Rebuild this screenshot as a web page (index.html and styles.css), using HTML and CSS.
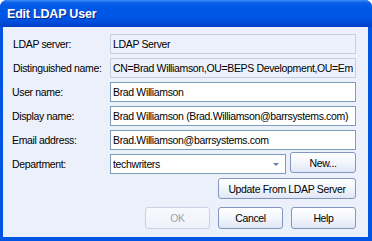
FILE: index.html
```html
<!DOCTYPE html>
<html lang="en">
<head>
  <meta charset="UTF-8">
  <title>Edit LDAP User</title>
  <link rel="stylesheet" href="styles.css">
</head>
<body>
  <div class="window">
    <div class="titlebar">
      <span class="title">Edit LDAP User</span>
    </div>
    <div class="client">
      <div class="form">
        <label class="indent">LDAP server:</label>
        <input type="text" class="field readonly" value="LDAP Server" readonly>

        <label class="indent">Distinguished name:</label>
        <input type="text" class="field readonly" value="CN=Brad Williamson,OU=BEPS Development,OU=Employees,DC=barrsystems,DC=com" readonly>

        <label>User name:</label>
        <input type="text" class="field" value="Brad Williamson">

        <label>Display name:</label>
        <input type="text" class="field" value="Brad Williamson (Brad.Williamson@barrsystems.com)">

        <label>Email address:</label>
        <input type="text" class="field" value="Brad.Williamson@barrsystems.com">

        <label>Department:</label>
        <div class="combo-row">
          <div class="combo">
            <span class="combo-text">techwriters</span>
            <span class="combo-arrow"></span>
          </div>
          <button class="btn new-btn">New...</button>
        </div>
      </div>

      <div class="update-row">
        <button class="btn update-btn">Update From LDAP Server</button>
      </div>

      <div class="actions">
        <button class="btn" disabled>OK</button>
        <button class="btn">Cancel</button>
        <button class="btn">Help</button>
      </div>
    </div>
  </div>
</body>
</html>
```

FILE: styles.css
```css
body {
  margin: 0;
  padding: 0;
  background-color: #fff;
  font-family: 'Liberation Sans', Arial, sans-serif;
  font-size: 10.5px;
  letter-spacing: -0.35px;
  color: #000;
}
.window {
  width: 372px;
  height: 241px;
  display: flex;
  flex-direction: column;
  border-radius: 7px 7px 0 0;
  overflow: hidden;
  background-color: #0054e3;
  box-sizing: border-box;
}
.titlebar {
  height: 27px;
  flex-shrink: 0;
  display: flex;
  align-items: center;
  padding-left: 7px;
  background: linear-gradient(#3d8bf7 0px, #0a5ee9 3px, #0058e6 8px, #0055e5 18px, #0048d6 24px, #003fc4 27px);
}
.title {
  color: #fff;
  font-weight: bold;
  font-size: 12.5px;
  letter-spacing: -0.2px;
  text-shadow: 1px 1px 0 #0a2a8a;
}
.client {
  flex: 1;
  margin: 0 4px 4px 3px;
  background-color: #ecf0fb;
  padding: 7px 12px 0 8px;
}
.form {
  display: grid;
  grid-template-columns: 99px 1fr;
  grid-auto-rows: 20px;
  row-gap: 4px;
  align-items: center;
}
label {
  padding-left: 1px;
  white-space: nowrap;
}
label.indent {
  padding-left: 2px;
}
.field {
  height: 20px;
  box-sizing: border-box;
  border: 1px solid #7f9db9;
  background-color: #fff;
  padding: 0 2px;
  font-family: inherit;
  font-size: inherit;
  letter-spacing: inherit;
  color: #000;
  outline: none;
}
.field.readonly {
  background-color: #edf1fb;
  border-color: #c3cfe3;
}
.combo-row {
  display: flex;
  gap: 4px;
  height: 20px;
}
.combo {
  flex: 1;
  border: 1px solid #7f9db9;
  background-color: #fff;
  display: flex;
  align-items: center;
  padding-left: 2px;
}
.combo-text {
  flex: 1;
}
.combo-arrow {
  width: 0;
  height: 0;
  border-left: 3px solid transparent;
  border-right: 3px solid transparent;
  border-top: 3px solid #6a7ea3;
  margin-right: 6px;
}
.btn {
  height: 21px;
  box-sizing: border-box;
  border: 1px solid #8197bf;
  border-radius: 3px;
  background: linear-gradient(#ffffff, #f3f6fc 50%, #dfe6f4);
  font-family: inherit;
  font-size: inherit;
  letter-spacing: inherit;
  color: #000;
  padding: 0;
}
.btn:disabled {
  border-color: #c9d3e6;
  color: #a0a6b0;
  background: linear-gradient(#f7f9fd, #eef2fa);
}
.new-btn {
  width: 66px;
  margin-top: -2px;
}
.update-row {
  display: flex;
  justify-content: flex-end;
  margin-top: 4px;
}
.update-btn {
  width: 138px;
}
.actions {
  display: flex;
  justify-content: flex-end;
  gap: 8px;
  margin-top: 8px;
}
.actions .btn {
  width: 65px;
  height: 22px;
}
```
